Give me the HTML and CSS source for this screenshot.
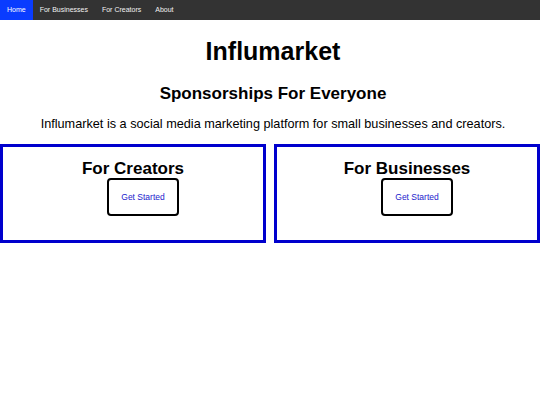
FILE: index.html
```html
<!DOCTYPE html>
<html>
<head>
<meta charset="utf-8">
<link rel="stylesheet" href="styles.css">
</head>
<body>
<nav class="nav">
  <a class="nav-link active" href="#">Home</a>
  <a class="nav-link" href="#">For Businesses</a>
  <a class="nav-link" href="#">For Creators</a>
  <a class="nav-link" href="#">About</a>
</nav>
<header class="hero">
  <h1 class="title">Influmarket</h1>
  <h2 class="subtitle">Sponsorships For Everyone</h2>
  <p class="intro">Influmarket is a social media marketing platform for small businesses and creators.</p>
</header>
<div class="cards">
  <div class="card">
    <h3 class="card-title">For Creators</h3>
    <a class="btn" href="#">Get Started</a>
  </div>
  <div class="card">
    <h3 class="card-title">For Businesses</h3>
    <a class="btn" href="#">Get Started</a>
  </div>
</div>
</body>
</html>
```
FILE: styles.css
```css
* { box-sizing: border-box; }
body {
  margin: 0;
  font-family: "Liberation Sans", Arial, sans-serif;
  color: #000;
  background: #fff;
}
.nav {
  display: flex;
  height: 20px;
  background: #333333;
}
.nav-link {
  display: block;
  padding: 0 7px;
  line-height: 20px;
  font-size: 7px;
  color: #f2f2f2;
  text-decoration: none;
}
.nav-link.active {
  background: #0a3cff;
  color: #fff;
}
.hero {
  padding-left: 6px;
}
.title {
  margin: 16px 0 0;
  text-align: center;
  font-size: 25px;
  line-height: 30px;
  font-weight: bold;
}
.subtitle {
  margin: 18px 0 0;
  text-align: center;
  font-size: 17px;
  line-height: 20px;
  font-weight: bold;
}
.intro {
  margin: 12px 0 0;
  text-align: center;
  font-size: 12.7px;
  line-height: 16px;
}
.cards {
  display: flex;
  gap: 8px;
  margin-top: 12px;
}
.card {
  flex: 1;
  height: 99px;
  border: 3px solid #0000cd;
  text-align: center;
  padding-top: 13px;
}
.card-title {
  margin: 0;
  font-size: 17px;
  line-height: 18px;
  font-weight: bold;
}
.btn {
  display: inline-flex;
  align-items: center;
  justify-content: center;
  width: 72px;
  height: 38px;
  margin-left: 20px;
  border: 2.5px solid #000;
  border-radius: 4px;
  font-size: 8.5px;
  color: #2222cc;
  text-decoration: none;
}
```
